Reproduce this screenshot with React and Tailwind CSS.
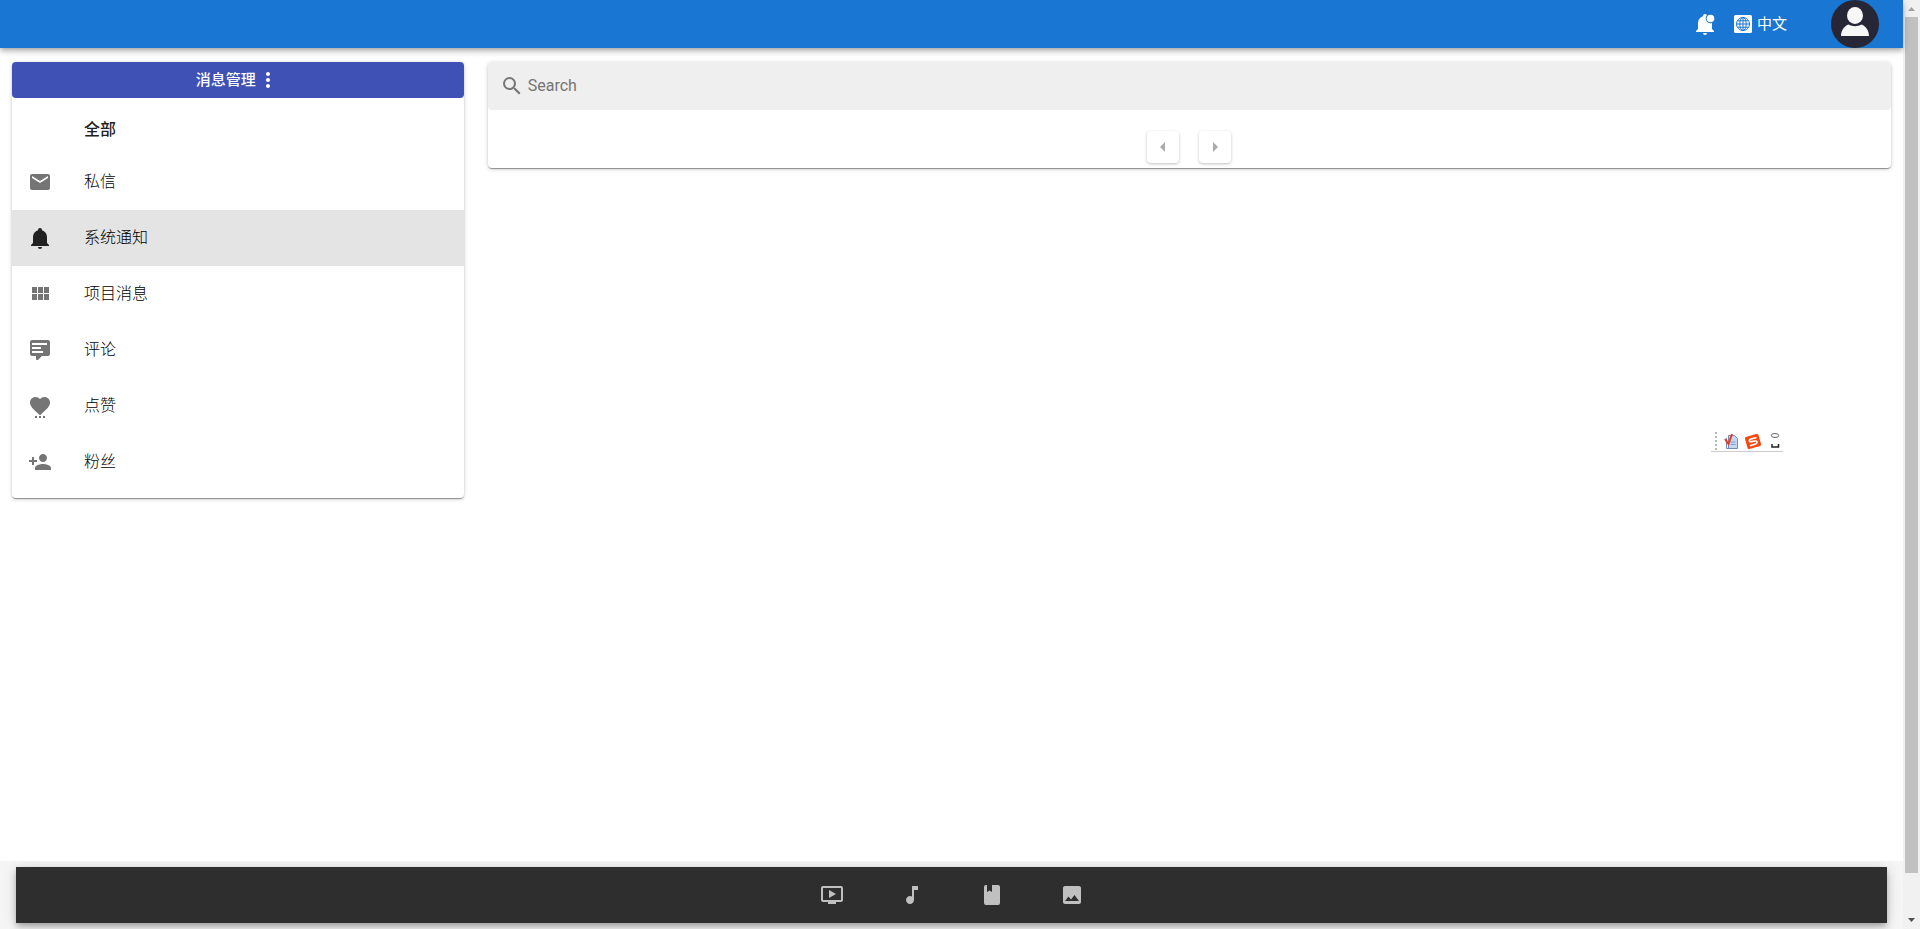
import React, { useState } from 'react';
import {
  MdArrowLeft,
  MdArrowRight,
  MdImage,
  MdMail,
  MdMoreVert,
  MdMusicNote,
  MdOndemandVideo,
  MdPersonAdd,
  MdSearch,
} from 'react-icons/md';

const BELL_PATH =
  'M21,19V20H3V19L5,17V11C5,7.9 7.03,5.17 10,4.29C10,4.19 10,4.1 10,4A2,2 0 0,1 12,2A2,2 0 0,1 14,4C14,4.1 14,4.19 14,4.29C16.97,5.17 19,7.9 19,11V17L21,19M14,21A2,2 0 0,1 12,23A2,2 0 0,1 10,21';

const BellIcon = ({ className }) => (
  <svg viewBox="0 0 24 24" fill="currentColor" className={className}>
    <path d={BELL_PATH} />
  </svg>
);

const BellBadgeIcon = ({ className }) => (
  <svg viewBox="0 0 24 24" fill="currentColor" className={className}>
    <mask id="bell-badge-cut">
      <rect width="24" height="24" fill="#fff" />
      <circle cx="17.5" cy="6.5" r="4.8" fill="#000" />
    </mask>
    <path d={BELL_PATH} mask="url(#bell-badge-cut)" />
    <circle cx="17.5" cy="6.5" r="3.8" />
  </svg>
);

const GridIcon = ({ className }) => (
  <svg viewBox="0 0 24 24" fill="currentColor" className={className}>
    <path d="M4 11h5V5H4v6zm0 7h5v-6H4v6zm6 0h5v-6h-5v6zm6 0h5v-6h-5v6zm-6-7h5V5h-5v6zm6-6v6h5V5h-5z" />
  </svg>
);

const CommentTextIcon = ({ className }) => (
  <svg viewBox="0 0 24 24" fill="currentColor" className={className}>
    <path d="M9,22A1,1 0 0,1 8,21V18H4A2,2 0 0,1 2,16V4C2,2.89 2.9,2 4,2H20A2,2 0 0,1 22,4V16A2,2 0 0,1 20,18H13.9L10.2,21.71C10,21.9 9.75,22 9.5,22H9M4,5V7H19V5H4M4,9V11H13V9H4M4,13V15H15V13H4Z" />
  </svg>
);

const HeartDotsIcon = ({ className }) => (
  <svg viewBox="0 0 24 24" fill="currentColor" className={className}>
    <path d="M12 21.35l-1.45-1.32C5.4 15.36 2 12.28 2 8.5 2 5.42 4.42 3 7.5 3c1.74 0 3.41.81 4.5 2.09C13.09 3.81 14.76 3 16.5 3 19.58 3 22 5.42 22 8.5c0 3.78-3.4 6.86-8.55 11.54L12 21.35z" />
    <path d="M7 22h2v2H7zM11 22h2v2h-2zM15 22h2v2h-2z" />
  </svg>
);

const BookIcon = ({ className }) => (
  <svg viewBox="0 0 24 24" fill="currentColor" className={className}>
    <path d="M18,22A2,2 0 0,0 20,20V4C20,2.89 19.1,2 18,2H12V9L9.5,7.5L7,9V2H6A2,2 0 0,0 4,4V20A2,2 0 0,0 6,22H18Z" />
  </svg>
);

const GlobeIcon = ({ className }) => (
  <svg viewBox="0 0 20 20" fill="none" className={className}>
    <rect x="1" y="1" width="18" height="18" rx="1.5" fill="#fff" />
    <g stroke="#1976d2" strokeWidth="1">
      <circle cx="10" cy="10" r="6.5" />
      <ellipse cx="10" cy="10" rx="3.2" ry="6.5" />
      <path d="M10 3.5v13M3.5 10h13M4.5 6.8h11M4.5 13.2h11" />
    </g>
  </svg>
);

const MESSAGE_TYPES = [
  { key: 'private', label: '私信', Icon: MdMail },
  { key: 'system', label: '系统通知', Icon: BellIcon },
  { key: 'project', label: '项目消息', Icon: GridIcon },
  { key: 'comment', label: '评论', Icon: CommentTextIcon },
  { key: 'like', label: '点赞', Icon: HeartDotsIcon },
  { key: 'fans', label: '粉丝', Icon: MdPersonAdd },
];

const FOOTER_LINKS = [
  { key: 'video', label: 'Video', Icon: MdOndemandVideo },
  { key: 'music', label: 'Music', Icon: MdMusicNote },
  { key: 'book', label: 'Book', Icon: BookIcon },
  { key: 'image', label: 'Image', Icon: MdImage },
];

const CARD =
  'rounded bg-white shadow-[0_2px_1px_-1px_rgba(0,0,0,0.2),0_1px_1px_0_rgba(0,0,0,0.2),0_1px_4px_0_rgba(0,0,0,0.2)]';
const PAGER =
  'flex size-8 items-center justify-center rounded bg-white text-[#ababab] shadow-[0_1px_3px_0_rgba(0,0,0,0.25)]';

const TopBar = () => (
  <header className="relative flex h-12 items-center justify-end bg-[#1976d2] pr-6 text-white shadow-[0_2px_4px_-1px_rgba(0,0,0,0.2),0_4px_5px_0_rgba(0,0,0,0.14),0_1px_10px_0_rgba(0,0,0,0.12)]">
    <button type="button" aria-label="Notifications" className="mr-4">
      <BellBadgeIcon className="size-6" />
    </button>
    <button type="button" className="mr-11 flex items-center gap-1 text-[15px]">
      <GlobeIcon className="size-5" />
      中文
    </button>
    <button type="button" aria-label="Account">
      <svg viewBox="0 0 48 48" className="size-12">
        <circle cx="24" cy="24" r="24" fill="#262637" />
        <ellipse cx="24" cy="15.5" rx="8" ry="8.5" fill="#f7f7f7" />
        <path d="M10 36c0-5 2.5-9.500 7.5-11.500 4 2.300 9 2.300 13 0C35.500 26.500 38 31 38 36z" fill="#f7f7f7" />
      </svg>
    </button>
  </header>
);

const MessageMenu = ({ active, onSelect }) => (
  <aside className={CARD}>
    <button
      type="button"
      className="flex h-9 w-full items-center justify-center rounded bg-[#3f51b5] text-[15px] font-medium text-white"
    >
      消息管理
      <MdMoreVert className="size-6" />
    </button>
    <nav className="py-2">
      <h2 className="flex h-12 items-center pl-[72px] text-base font-medium text-[#212121]">全部</h2>
      <ul>
        {MESSAGE_TYPES.map(({ key, label, Icon }) => (
          <li key={key}>
            <button
              type="button"
              onClick={() => onSelect(key)}
              className={`flex h-14 w-full items-center gap-8 px-4 text-base font-light text-black ${
                active === key ? 'bg-[#e4e4e4]' : ''
              }`}
            >
              <Icon className={`size-6 ${active === key ? 'text-[#212121]' : 'text-[#757575]'}`} />
              {label}
            </button>
          </li>
        ))}
      </ul>
    </nav>
  </aside>
);

const MessageList = () => (
  <section className={`${CARD} col-span-3 pb-[5px]`}>
    <label className="flex h-12 items-center gap-1 rounded bg-[#efefef] px-3 text-[#757575]">
      <MdSearch className="size-6" />
      <input
        type="text"
        placeholder="Search"
        aria-label="Search"
        className="flex-1 bg-transparent font-['Roboto'] text-base text-[#212121] outline-none placeholder:text-[#757575]"
      />
    </label>
    <div className="mt-[21px] flex justify-center gap-5">
      <button type="button" disabled aria-label="Previous page" className={PAGER}>
        <MdArrowLeft className="size-6" />
      </button>
      <button type="button" disabled aria-label="Next page" className={PAGER}>
        <MdArrowRight className="size-6" />
      </button>
    </div>
  </section>
);

const BottomBar = () => (
  <footer className="mt-auto overflow-hidden bg-[#f5f5f5] px-4 py-1.5">
    <nav className="flex h-14 justify-center bg-[#2e2e2e] shadow-[0_3px_5px_-1px_rgba(0,0,0,0.2),0_5px_8px_0_rgba(0,0,0,0.14),0_1px_14px_0_rgba(0,0,0,0.12)]">
      {FOOTER_LINKS.map(({ key, label, Icon }) => (
        <a
          key={key}
          href={`#${key}`}
          aria-label={label}
          className="flex w-20 items-center justify-center text-[#c0c0c0]"
        >
          <Icon className="size-6" />
        </a>
      ))}
    </nav>
  </footer>
);

const InputToolbar = () => (
  <div className="absolute top-[430px] right-[120px] flex h-[22px] w-[72px] items-center border-b border-[#ccc] bg-white pl-1">
    <svg viewBox="0 0 68 20" className="h-5 w-[68px]">
      <path d="M1 1v18" stroke="#b5b5b5" strokeWidth="2" strokeDasharray="2 2" />
      <path d="M13.5 4.5h6l3 3v10h-9z" fill="#c3d9f3" stroke="#6d8db8" />
      <path d="M11.5 7v10.5h9" fill="none" stroke="#6d8db8" />
      <path d="M15.5 11h5M15.5 13.5h5" stroke="#7f9cc4" />
      <path d="M10 8l3.500 5L17 3" fill="none" stroke="#f4371b" strokeWidth="2" />
      <path d="M31 6l10-3q2-.5 2.500 1l2.500 9q.5 1.500-1 2l-10.500 3q-1.500.5-2-1L30 8q-.5-1.500 1-2z" fill="#f5490f" />
      <path d="M41.500 6.500l-5.500 1.500q-2 .7-1.500 2 .5 1 2 .7l3.500-.7q2-.2 2 1.300 0 1.300-1.500 1.700l-5.500 1.700" fill="none" stroke="#fff" strokeWidth="1.700" />
      <ellipse cx="60" cy="4.500" rx="3.700" ry="2" fill="none" stroke="#666" />
      <path d="M57 13v3h6.500v-3" fill="none" stroke="#222" strokeWidth="1.500" />
    </svg>
  </div>
);

const ScrollRail = () => (
  <div aria-hidden="true" className="flex w-[17px] shrink-0 flex-col items-center bg-[#f1f1f1]">
    <svg viewBox="0 0 17 17" className="size-[17px] shrink-0">
      <path d="M5 11l3.500-4L12 11z" fill="#a3a3a3" />
    </svg>
    <div className="w-[13px] flex-1 bg-[#c1c1c1]" />
    <svg viewBox="0 0 17 56" className="h-14 w-[17px] shrink-0">
      <path d="M5 45l3.500 4 3.500-4z" fill="#505050" />
    </svg>
  </div>
);

const App = () => {
  const [active, setActive] = useState('system');

  return (
    <div className="flex min-h-screen bg-white font-['Roboto','Noto_Sans_CJK_SC',sans-serif]">
      <div className="relative flex flex-1 flex-col">
        <TopBar />
        <main className="grid grid-cols-4 items-start gap-6 px-3 pt-3.5">
          <MessageMenu active={active} onSelect={setActive} />
          <MessageList />
        </main>
        <InputToolbar />
        <BottomBar />
      </div>
      <ScrollRail />
    </div>
  );
};

export default App;
